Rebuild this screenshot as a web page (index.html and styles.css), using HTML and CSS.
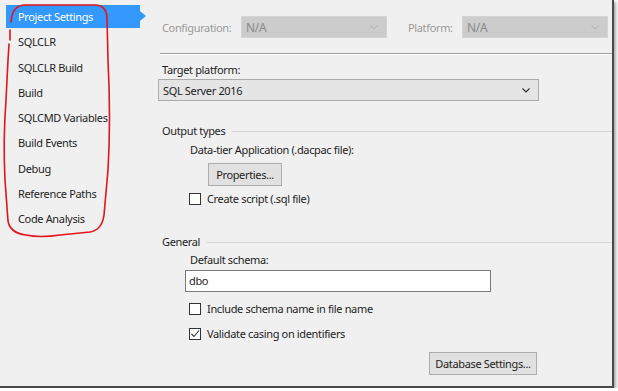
FILE: index.html
```html
<!DOCTYPE html>
<html>
<head>
<meta charset="utf-8">
<link rel="stylesheet" href="styles.css">
</head>
<body>
<div class="window">
  <nav class="sidebar">
    <div class="item selected">Project Settings</div>
    <div class="item">SQLCLR</div>
    <div class="item">SQLCLR Build</div>
    <div class="item">Build</div>
    <div class="item">SQLCMD Variables</div>
    <div class="item">Build Events</div>
    <div class="item">Debug</div>
    <div class="item">Reference Paths</div>
    <div class="item">Code Analysis</div>
  </nav>
  <main class="main">
    <div class="toprow">
      <span class="dislabel lbl-config">Configuration:</span>
      <div class="combo disabled w146"><span>N/A</span><svg class="chev" width="8" height="5" viewBox="0 0 8 5"><path d="M0.5 0.5 L4 4 L7.5 0.5" fill="none" stroke="#b4b4b4" stroke-width="1"/></svg></div>
      <span class="dislabel lbl-platform">Platform:</span>
      <div class="combo disabled w146"><span>N/A</span><svg class="chev" width="8" height="5" viewBox="0 0 8 5"><path d="M0.5 0.5 L4 4 L7.5 0.5" fill="none" stroke="#b4b4b4" stroke-width="1"/></svg></div>
    </div>
    <div class="sep"></div>
    <div class="label tp">Target platform:</div>
    <div class="combo target"><span>SQL Server 2016</span><svg class="chev" width="8" height="5" viewBox="0 0 8 5"><path d="M0.5 0.5 L4 4 L7.5 0.5" fill="none" stroke="#333" stroke-width="1.2"/></svg></div>

    <div class="group g-output"><span>Output types</span><i class="gline"></i></div>
    <div class="label sub dacpac">Data-tier Application (.dacpac file):</div>
    <button class="btn props">Properties...</button>
    <div class="check c-script"><span class="box"></span><span>Create script (.sql file)</span></div>

    <div class="group g-general"><span>General</span><i class="gline"></i></div>
    <div class="label sub schema">Default schema:</div>
    <div class="textbox">dbo</div>
    <div class="check c-include"><span class="box"></span><span>Include schema name in file name</span></div>
    <div class="check c-validate"><span class="box"><svg width="10" height="10" viewBox="0 0 10 10"><path d="M1.5 5 L4 7.5 L9 1.5" fill="none" stroke="#333" stroke-width="1.1"/></svg></span><span>Validate casing on identifiers</span></div>
    <div class="btnrow"><button class="btn dbset">Database Settings...</button></div>
  </main>
  <svg class="annot" width="120" height="245" viewBox="0 0 120 245">
    <path d="M10 40 L10 30 M11 22 Q12 6 24 5 L96 5 Q107 6 107 18 L108 60 Q111 120 108 170 L104 215 Q102 230 90 232 L60 235 Q40 238 26 235 Q10 233 8 221 L5 180 Q3 140 6 100 L8 60 L9 44" fill="none" stroke="#e3141b" stroke-width="1.6" stroke-linecap="round" stroke-linejoin="round"/>
  </svg>
</div>
</body>
</html>
```
FILE: styles.css
```css
html, body { margin: 0; padding: 0; background: #ffffff; }
body { font-family: "Noto Sans", "Open Sans", sans-serif; font-size: 11px; letter-spacing: -0.35px; color: #1e1e1e; }
.window {
  position: relative;
  width: 612px; height: 386px;
  background: #f0f0f0;
  border-right: 2px solid #4a4a4a;
  border-bottom: 2px solid #4a4a4a;
  box-shadow: 2px 2px 3px rgba(0,0,0,0.35);
  display: flex;
  overflow: visible;
}
.sidebar { width: 152px; padding: 5px 0 0 6px; display: flex; flex-direction: column; gap: 2.25px; }
.item { height: 23px; line-height: 23px; padding-left: 12px; width: 122px; color: #1e1e1e; position: relative; }
.item.selected { background: #3399ff; color: #fff; }
.item.selected::after {
  content: ""; position: absolute; right: -6px; top: 6px;
  border-left: 6px solid #3399ff; border-top: 5px solid transparent; border-bottom: 5px solid transparent;
}
.main { flex: 1; padding-top: 16px; display: flex; flex-direction: column; align-items: flex-start; }
.toprow { display: flex; align-items: center; height: 22px; }
.dislabel { color: #9a9a9a; }
.lbl-config { margin-left: 4px; width: 79px; }
.lbl-platform { margin-left: 21px; width: 54px; }
.combo { height: 22px; box-sizing: border-box; display: flex; align-items: center; justify-content: space-between; padding: 0 8px 0 4px; }
.combo.disabled { background: #cccccc; border: 1px solid #d4d4d4; color: #8a8a8a; font-size: 12px; }
.w146 { width: 146px; }
.sep { align-self: stretch; margin-left: 2px; margin-top: 15px; height: 0; border-top: 1px solid #a0a0a0; border-bottom: 1px solid #ffffff; }
.label { line-height: 16px; height: 16px; }
.tp { margin-top: 7px; margin-left: 4px; }
.combo.target { margin-top: 1px; width: 381px; background: #e5e5e5; border: 1px solid #acacac; color: #1e1e1e; }
.group { align-self: stretch; display: flex; align-items: center; line-height: 16px; height: 16px; margin-left: 4px; }
.gline { flex: 1; height: 0; border-top: 1px solid #d5d5d5; margin-left: 7px; }
.g-output { margin-top: 22px; }
.sub { margin-left: 32px; }
.dacpac { margin-top: 3px; }
.btn {
  font: inherit; letter-spacing: inherit; color: #1e1e1e;
  background: #e1e1e1; border: 1px solid #adadad; height: 23px; padding: 0; box-sizing: border-box;
}
.props { margin-top: 5px; margin-left: 50px; width: 74px; }
.check { display: flex; align-items: center; height: 16px; line-height: 16px; margin-left: 31px; }
.box { width: 12px; height: 12px; box-sizing: border-box; border: 1px solid #333; background: #fff; margin-right: 6px; display: flex; align-items: center; justify-content: center; }
.c-script { margin-top: 5px; }
.g-general { margin-top: 27px; }
.schema { margin-top: 2px; }
.textbox { margin-top: 2px; margin-left: 27px; width: 306px; height: 22px; box-sizing: border-box; background: #fff; border: 1px solid #7a7a7a; padding-left: 3px; line-height: 20px; }
.c-include { margin-top: 9px; }
.c-validate { margin-top: 9px; }
.btnrow { margin-top: 10px; margin-left: 271px; }
.dbset { width: 108px; }
.annot { position: absolute; left: 0; top: 0; pointer-events: none; }
```
